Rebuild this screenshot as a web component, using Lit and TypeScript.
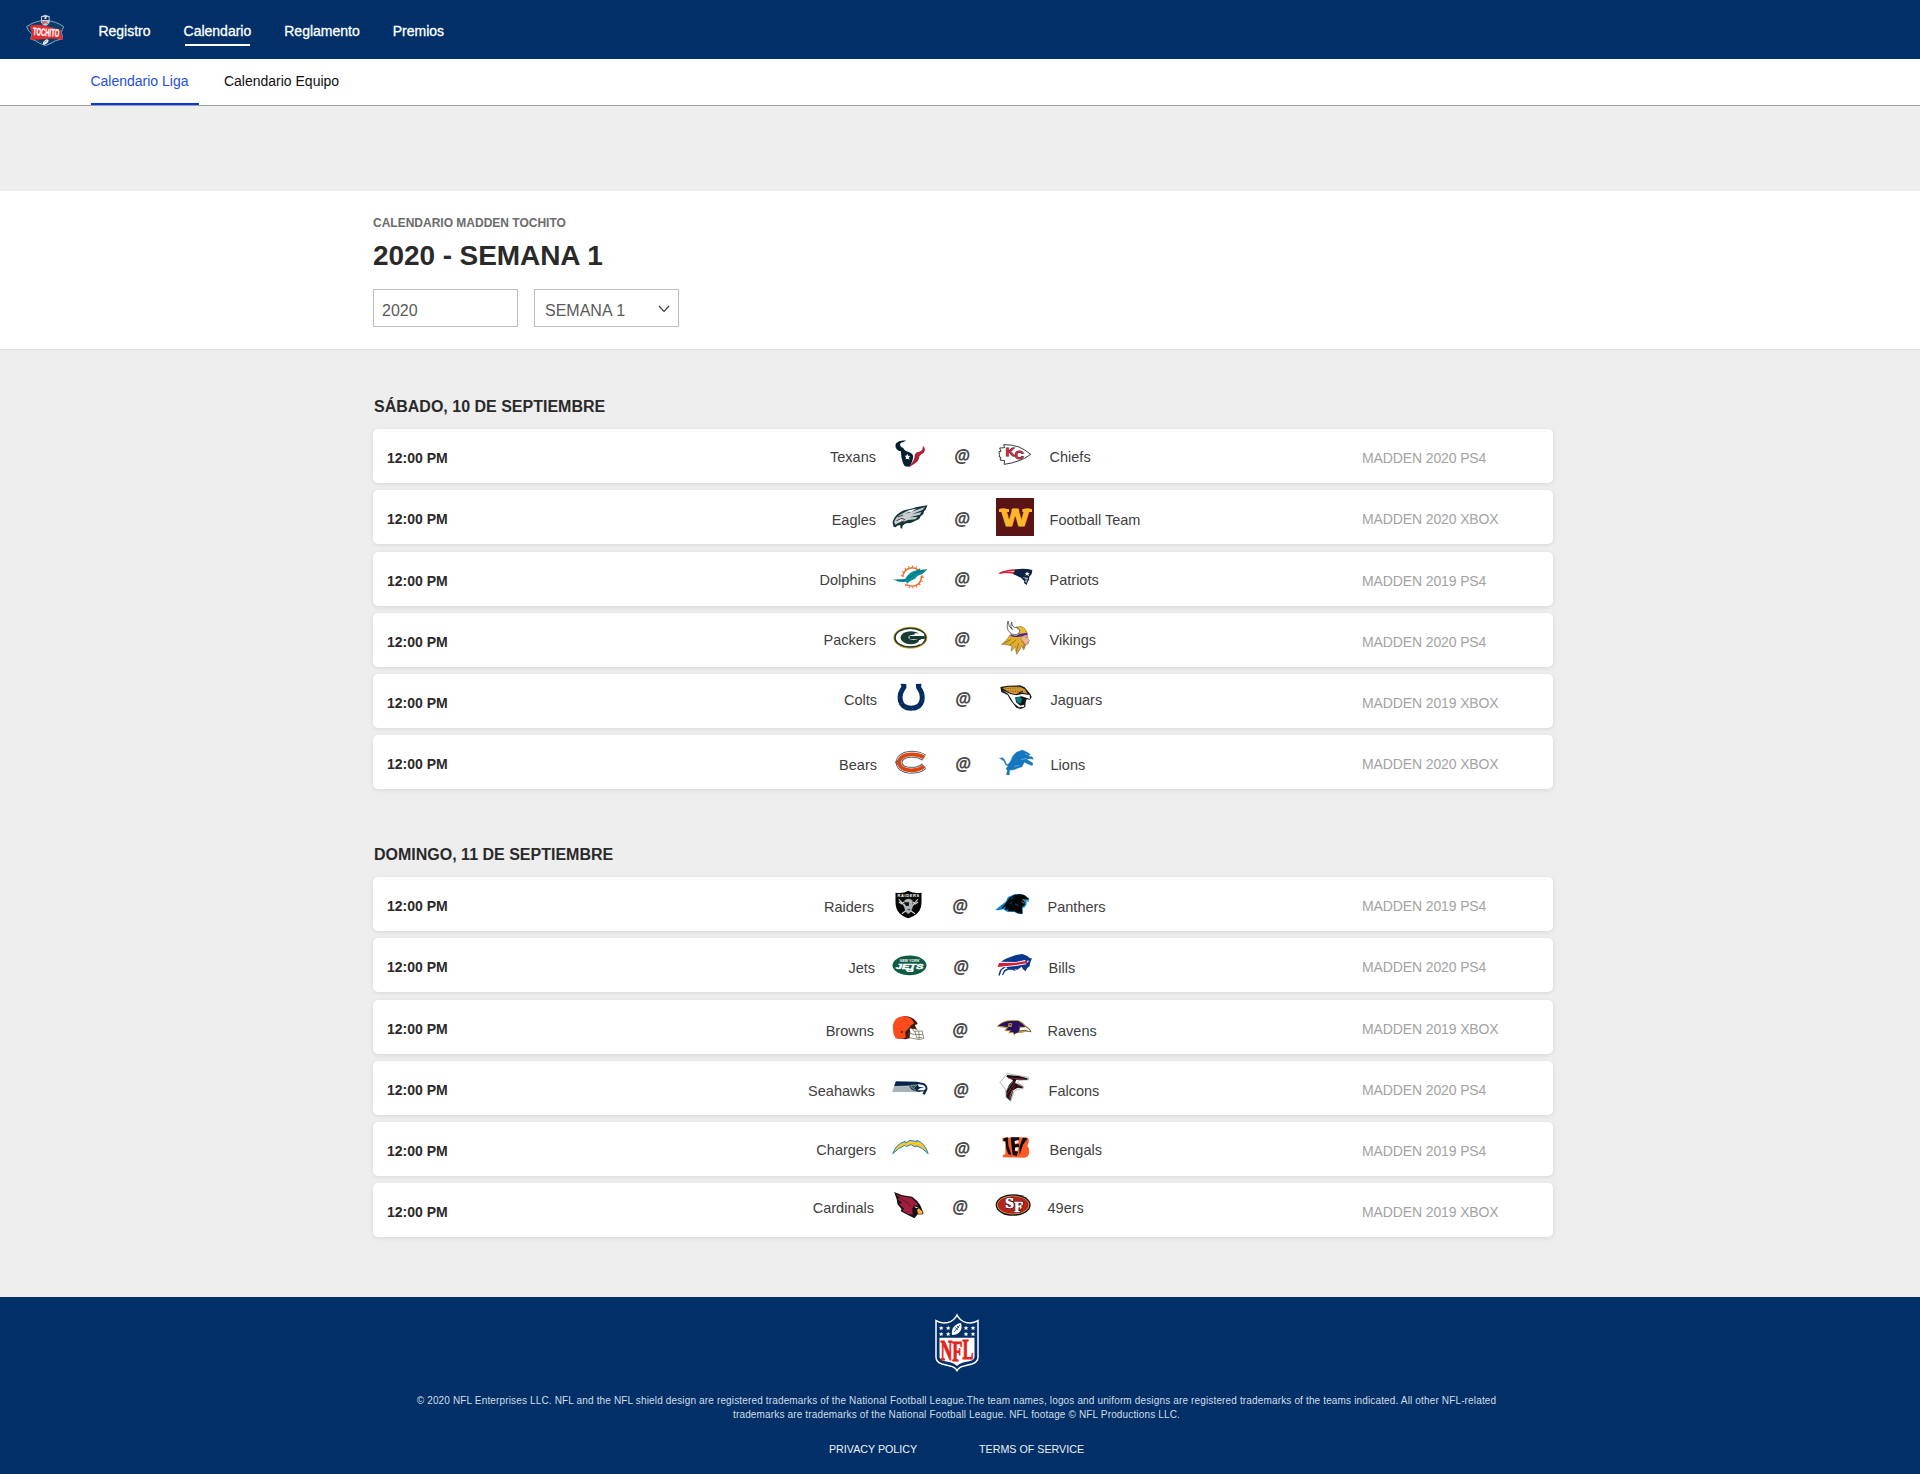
import { LitElement, html, svg, css, SVGTemplateResult } from "lit";
import { customElement, property } from "lit/decorators.js";

interface Mark { box: string; art: SVGTemplateResult; }
interface Game {
  away: string; home: string; platform: string;
  dx: number; top: number;
}

const LOGOS: Record<string, Mark> = {
  Texans: { box: "301.5 30 114 114", art: svg`
    <path fill="#03202f" d="M347 47C330 45 314 52 315 62C315 72 322 77 331 79C333 88 331 95 335 104C336 114 341 119 343 124L358 125C363 115 367 105 368 95C368 87 362 83 352 80C344 77 339 72 338 68C329 66 326 57 332 53C337 50 342 49 347 47Z"/>
    <path fill="#b2213a" d="M397 64C405 68 405 79 398 85C391 90 386 91 386 98C384 107 378 112 371 117L355 127C364 114 371 106 372 96C372 86 376 81 386 80C393 79 397 74 397 64Z"/>
    <path fill="#fff" d="M350 86L353 92L360 93L355 97L357 104L351 101L345 103L347 97L342 92L348 92Z"/>` },
  Chiefs: { box: "619 30 114 114", art: svg`
    <path fill="#fff" stroke="#2c2c2c" stroke-width="2.8" stroke-linejoin="round" d="M645 68L642 59Q665 58 688 66Q708 75 723 88Q705 102 688 107Q665 116 643 118L645 107L631 105L634 97L629 96Q630 89 628 80L634 79L630 69Z"/>
    <text x="648" y="94" class="heavy" font-size="31" fill="#e02840" stroke="#222" stroke-width="2.4" paint-order="stroke" textLength="54" lengthAdjust="spacingAndGlyphs" dy="0 9">KC</text>` },
  Eagles: { box: "301.5 218 114 114", art: svg`
    <path fill="#12343a" d="M306 291C309 279 317 268 327 262C345 249 362 254 375 246Q392 243 411 240L405 254L401 257L398 267L391 272L386 281L375 286Q363 294 349 294L342 296L336 302L335 310L330 308L329 299L320 301L316 306L309 304Z"/>
    <path fill="#c8cdd0" d="M311 290Q316 274 332 266Q350 254 372 251L344 266L380 253L403 245L396 254L364 267L393 260L388 268L358 276L382 275L374 282L352 284Q342 291 334 289L322 294L314 298Z"/>
    <path fill="none" stroke="#222" stroke-width="2.5" d="M318 286L335 279L344 284M328 292L340 287M322 275L338 269"/>
    <path fill="#fff" d="M323 285L334 282L330 288ZM350 258L380 249L362 260Z"/>` },
  "Football Team": { box: "619 218 114 114", art: svg`
    <rect x="619" y="218" width="114" height="114" fill="#5a1415"/>
    <text x="634" y="301" class="heavy" font-size="69" fill="#ffb62d" stroke="#ffb62d" stroke-width="3" textLength="85" lengthAdjust="spacingAndGlyphs">W</text>
    <path fill="#ffb62d" d="M628 251H658V260H628ZM698 251H727V260H698ZM666 251H688V258H666Z"/>` },
  Dolphins: { box: "301.5 400 114 114", art: svg`
    <circle cx="365" cy="457" r="28" fill="none" stroke="#f26a2b" stroke-width="4.5"/>
    <circle cx="365" cy="457" r="32" fill="none" stroke="#f26a2b" stroke-width="5" stroke-dasharray="3 8.5"/>
    <path fill="#fff" d="M314 459L348 457Q368 437 402 432L407 443L366 471L350 479L334 475Z"/>
    <path fill="#078e98" d="M307 463Q326 467 344 462Q358 440 378 437L388 432L390 436L411 433L402 443Q396 450 382 453Q374 464 361 468L349 477L347 471Q330 474 318 469Z"/>
    <path fill="none" stroke="#075a70" stroke-width="2.5" d="M350 461Q366 453 377 443L399 439M320 466L346 466"/>` },
  Patriots: { box: "619 400 114 114", art: svg`
    <path fill="#d4213c" d="M626 446Q645 435 678 434L677 439L648 440L677 442L673 447L646 445L631 448Z"/>
    <path fill="#0a2342" d="M677 434Q705 430 728 436L726 448L719 456L718 465L714 472L711 481L703 475L704 470L694 459L671 449Z"/>
    <path fill="#fff" d="M712 441L715 445L720 445L716 449L718 454L712 451L707 453L709 448L705 445L710 445Z"/>
    <path fill="#b6bec6" d="M698 457L716 460L713 464L711 474L705 472L708 464Z"/>
    <path stroke="#0a2342" stroke-width="1.5" d="M702 462L712 465M706 470L711 468"/>` },
  Packers: { box: "301.5 25 114 114", art: svg`
    <ellipse cx="359.5" cy="84" rx="51" ry="33" fill="#e0a62a"/>
    <ellipse cx="359.5" cy="84" rx="48.5" ry="30.5" fill="#173a33"/>
    <ellipse cx="359.5" cy="84" rx="43.5" ry="26" fill="#fff"/>
    <ellipse cx="361" cy="84" rx="31" ry="19.5" fill="#173a33"/>
    <ellipse cx="369" cy="83" rx="15" ry="7.5" fill="#fff"/>
    <rect x="372" y="71" width="28" height="8" fill="#fff"/>
    <rect x="357" y="79" width="46" height="9" fill="#173a33"/>
    <path fill="#fff" d="M386 91L401 91L392 104L381 103Z"/>` },
  Vikings: { box: "619 25 114 114", art: svg`
    <path fill="#e3ad2d" stroke="#70531f" stroke-width="1.6" d="M636 104L651 91L661 76L676 81L703 80L700 92L717 99L709 104L702 121L696 108L690 121L681 134L678 121L679 111L664 124L667 109L652 105Z"/>
    <path fill="#f0b92f" stroke="#5d4315" stroke-width="1.4" d="M680 52Q706 45 712 71L686 74Q693 60 680 52Z"/>
    <path fill="#fff" stroke="#333" stroke-width="2.2" d="M655 34Q648 58 661 69Q675 80 687 71Q696 60 680 54Q667 55 666 37Q660 50 668 60Q656 51 655 34Z"/>
    <path fill="#4f2683" d="M663 73Q676 82 688 74L713 69L714 76L687 81Q674 84 663 78Z"/>
    <path fill="#e9b996" stroke="#8f5c45" stroke-width="1.2" d="M699 80L714 77L715 87L720 94L714 97L716 103L704 104L700 94L693 89Z"/>
    <path stroke="#684a20" stroke-width="1.7" fill="none" d="M643 101L665 89M661 106L680 90M681 125L687 100M702 115L704 103L695 94M707 84L713 83"/>` },
  Colts: { box: "304.5 204 114 114", art: svg`
    <path fill="none" stroke="#022b60" stroke-width="15" d="M341 231C321 255 324 295 362 295C400 295 403 255 383 231"/>
    <path fill="#022b60" d="M330 221L347 222L348 235L335 235ZM376 222L393 221L391 235L377 235Z"/>
    <path fill="none" stroke="#9fb2c8" stroke-width="1.6" stroke-dasharray="2 17" d="M333 242C321 264 332 296 362 296C392 296 403 264 391 242"/>` },
  Jaguars: { box: "622 204 114 114", art: svg`
    <path fill="#171717" d="M632 231L654 227L691 226L705 232L714 242L722 252L726 261L721 269L711 268L708 276L707 291L693 297L680 293L662 270L654 255L635 246Z"/>
    <path fill="#d5982f" d="M638 234L655 230L691 230L706 238L713 251L693 247L678 253L660 248Z"/>
    <path fill="#fff" d="M637 240L655 251L663 264L672 279L688 292L703 290L704 284L692 287L679 277L677 262L696 259L721 267L720 255L698 252L680 256L662 252Z"/>
    <path fill="#087b8b" d="M675 263L690 260L697 267L694 280L684 280Z"/>
    <path fill="none" stroke="#6b4a1c" stroke-width="2.5" stroke-dasharray="3 4" d="M647 236L694 233M655 243L684 244L705 243"/>
    <path stroke="#111" stroke-width="2.5" d="M686 249L700 244"/>` },
  Bears: { box: "304.5 397 114 114", art: svg`
    <g fill="none">
    <path stroke="#94a0ac" stroke-width="21" d="M401 441Q385 431 364 431C338 431 326 443 326 455C326 468 338 479 364 479Q386 479 401 466"/>
    <path stroke="#273a52" stroke-width="18" d="M401 440Q385 431 364 431C338 431 326 443 326 455C326 468 338 479 364 479Q386 479 401 467"/>
    <path stroke="#fff" stroke-width="15" d="M401 440Q385 431 364 431C338 431 326 443 326 455C326 468 338 479 364 479Q386 479 401 467"/>
    <path stroke="#dc4510" stroke-width="11.5" d="M401 440Q385 431 364 431C338 431 326 443 326 455C326 468 338 479 364 479Q386 479 401 467"/></g>
    <path fill="#dc4510" stroke="#65717d" stroke-width="1.5" d="M313 455L324 447L323 464Z"/>` },
  Lions: { box: "622 397 114 114", art: svg`
    <path fill="#1577bd" stroke="#bac5ce" stroke-width="2.5" paint-order="stroke" d="M629 443L639 441Q648 448 650 459Q654 466 663 451L670 435L680 425L698 418L711 424L722 431L716 436L728 439L731 446L720 444L711 446L730 458L728 465L717 461L704 455L697 468L684 473L673 477L660 479L659 493L650 492L653 480L649 473L656 466Q647 466 643 451L635 446Z"/>
    <path stroke="#e6eef4" stroke-width="1.2" fill="none" d="M694 447L711 443M674 467L688 464M706 429L714 432"/>` },
  Raiders: { box: "295.5 15 114 114", art: svg`
    <path fill="#050505" d="M315 38Q339 41 353 32Q369 41 393 38L393 66C393 94 377 108 353 115C331 108 315 94 315 66Z"/>
    <text x="321" y="51" class="heavy" font-size="12" fill="#fff" textLength="65">RAIDERS</text>
    <path fill="#aeb3b5" d="M342 61Q354 52 366 61L367 80L361 96L353 102L345 95L340 79Z"/>
    <path fill="#111" d="M339 67L356 67L355 78L346 77ZM348 89L360 87L357 91Z"/>
    <path fill="none" stroke="#d0d2d2" stroke-width="3.5" d="M325 58L335 69L342 78M382 58L371 70L366 78M346 92L334 101M361 92L373 101M325 66L334 72L341 66M367 66L374 72L383 66"/>` },
  Panthers: { box: "613 15 114 114", art: svg`
    <path fill="#0788cc" d="M617 90L632 77L648 65L655 51L674 43L693 42L705 45L719 56L717 65L710 64L711 72L705 82L699 84L699 102L685 101L674 96L652 95L641 88L626 91Z"/>
    <path fill="#050608" d="M634 86L648 70L659 54L675 44L693 43L704 46L718 57L711 61L701 60L707 73L697 82L698 101L686 100L674 94L654 94L657 88L645 89L649 78L640 85Z"/>
    <path stroke="#0788cc" stroke-width="1.8" fill="none" d="M663 58L672 51M661 73L668 65M676 72L687 77"/>
    <path stroke="#dfe7ec" stroke-width="1.8" fill="none" d="M698 59L719 61M697 64L703 71"/>` },
  Jets: { box: "298.5 199 114 114", art: svg`
    <ellipse cx="357" cy="257" rx="51" ry="29.5" fill="#0c5b42"/>
    <text x="328" y="246" class="heavy slant" font-size="9" fill="#fff" textLength="59" lengthAdjust="spacingAndGlyphs">NEW YORK</text>
    <text x="316" y="268" class="heavy slant" font-size="24" fill="#fff" stroke="#fff" stroke-width="1.5" textLength="83" lengthAdjust="spacingAndGlyphs">JETS</text>
    <path fill="#fff" d="M344 270Q358 263 371 270L367 277L351 277Z"/><path stroke="#0c5b42" stroke-width="1.5" d="M353 272L363 272"/>` },
  Bills: { box: "616 199 114 114", art: svg`
    <path fill="#09388c" d="M633 247Q646 236 662 232L679 226L698 223L713 229L721 236L727 236L722 248L720 259L712 266L708 275L700 269L696 261L683 270L674 269L679 275L667 270L657 270L647 275L640 287L637 286L643 272L654 266L649 262L636 271L630 288L626 287L631 271L640 263L634 260Z"/>
    <path fill="#fff" d="M632 246L679 247L706 241L710 247L709 254L678 259L627 264Z"/>
    <path fill="#d41d38" d="M628 250L679 249L713 243L711 251L679 256L624 262Z"/>
    <path fill="#fff" d="M712 243L718 243L714 250Z"/>` },
  Browns: { box: "295.5 387 114 114", art: svg`
    <path fill="#3c1d0e" d="M339 408Q362 407 377 424L382 432L373 435L379 448L361 450L357 475L344 478L316 475Z"/>
    <path fill="#ff4a1b" d="M307 444C307 420 321 409 342 409Q364 411 371 430L360 437L352 448L344 455L346 472L336 477L315 474Q307 462 307 444Z"/>
    <path fill="none" stroke="#fff" stroke-width="5" d="M360 445L365 470L386 478L398 473L395 452L360 449M362 461L398 461"/>
    <path fill="none" stroke="#625747" stroke-width="2" d="M358 443L366 446L370 454L395 453L400 475L386 479L357 473L354 459L370 463L397 464M373 454L379 474L395 472M369 444L383 451M385 454L386 477"/>
    <circle cx="334" cy="456" r="3.5" fill="#632914"/>` },
  Ravens: { box: "613 387 114 114", art: svg`
    <path fill="#c49a3c" d="M621 440Q636 422 660 420L685 420L699 427L710 438L721 446L726 457L710 455L694 459L677 460L675 467L669 459L655 460L660 454L644 453L649 445L634 442Z"/>
    <path fill="#261260" d="M625 438Q641 423 665 423L687 423L699 432L708 441L692 440L686 457L674 462L670 456L660 457L664 451L649 451L656 442L639 439Z"/>
    <path fill="#fff" stroke="#161616" stroke-width="1.6" d="M690 442L708 440L719 448L723 455L705 451L688 453Z"/>
    <text x="654" y="441" class="heavy slant" font-size="18" fill="#dbaa3c">B</text>
    <path fill="#d5213b" d="M686 438L695 438L690 441Z"/>` },
  Seahawks: { box: "298.5 43 114 114", art: svg`
    <path fill="#a7b2b9" d="M311 94L358 95Q369 102 382 112L305 112Z"/>
    <path fill="#082448" d="M316 80L379 81L401 86Q411 93 411 103L403 120L396 118L400 110L383 112L364 105L354 93L311 94Z"/>
    <path fill="#fff" d="M381 88L398 91Q406 96 406 101L401 107L381 107L388 101L402 99L385 96Z"/>
    <path fill="none" stroke="#a7b2b9" stroke-width="2.3" d="M354 92Q361 99 377 107M360 92L379 91L369 101L360 92"/>
    <path fill="#64b33b" d="M364 91L374 92L369 96Z"/>` },
  Falcons: { box: "616 43 114 114", art: svg`
    <path fill="#fff" stroke="#aeb4b8" stroke-width="3" d="M631 83L653 57L716 68L717 75L688 77L683 84L702 96L700 102L683 104L672 112L663 140L649 128L648 105Z"/>
    <path fill="#101010" d="M650 66L653 61L687 64L713 71L714 75L680 75L676 84L700 96L698 101L684 99L671 107L662 138L650 127L650 108L658 91L670 77Z"/>
    <path stroke="#b51b36" stroke-width="2.6" d="M655 70L701 73M676 82L652 119M676 93L657 128M682 90L698 97"/>
    <path stroke="#bdc2c4" stroke-width="1.5" d="M671 79L649 110M668 107L660 133"/>` },
  Chargers: { box: "301.5 220 114 114", art: svg`
    <path fill="#ffc52b" stroke="#1686c4" stroke-width="3" stroke-linejoin="round" d="M307 297Q316 268 344 260L345 265L358 257L380 261L379 257Q403 265 413 297Q396 279 378 273L376 277L361 270L347 276L343 272Q323 280 307 297Z"/>` },
  Bengals: { box: "619 220 114 114", art: svg`
    <path fill="#fb5a24" d="M638 249L710 248Q720 252 717 262L713 274Q719 279 719 291Q718 307 705 309L640 308L639 301L647 299L647 261L639 260Z"/>
    <path fill="#0c0c0c" d="M642 251L655 248L656 271L665 302L656 298Q647 280 648 260L641 259ZM663 248L689 248L688 257L675 259L676 269L688 268L688 277L676 279L677 289L685 291L681 305L669 300L665 269ZM699 249L714 251L700 270L690 300L689 278Z"/>
    <path fill="#fff" d="M675 259L687 257L686 265L676 267ZM676 279L686 278L685 287L677 290Z"/>` },
  Cardinals: { box: "295.5 393 114 114", art: svg`
    <path fill="#151013" d="M311 411L336 421L365 425L380 438L389 450L399 474L397 478L382 477L372 490L352 480L331 469L333 462L321 448L319 434Z"/>
    <path fill="#a31d3e" d="M316 417L338 425L363 428L379 445L383 453L371 450L365 462L367 479L351 476L336 467L341 462L325 446L335 444L320 431L329 430Z"/>
    <path fill="#f8b633" stroke="#332213" stroke-width="1.5" d="M379 465L385 459L397 470L396 477L383 478Z"/>
    <path fill="#fff" d="M371 453L384 459L376 459Z"/>
    <path stroke="#151013" stroke-width="1.6" fill="none" d="M329 431L352 443L360 455"/>` },
  "49ers": { box: "613 393 114 114", art: svg`
    <ellipse cx="670.5" cy="450" rx="52.5" ry="32.5" fill="#15110f"/>
    <ellipse cx="670.5" cy="450" rx="48.5" ry="28.5" fill="#c6a45a"/>
    <ellipse cx="670.5" cy="450" rx="46" ry="26" fill="#b9231d"/>
    <text x="647" y="458" class="slab" font-size="38" fill="#fff" stroke="#241411" stroke-width="5" paint-order="stroke" textLength="52" lengthAdjust="spacingAndGlyphs" dy="0 13">SF</text>
    <text x="647" y="458" class="slab" font-size="38" fill="#fff" stroke="#fff" stroke-width="1.6" textLength="52" lengthAdjust="spacingAndGlyphs" dy="0 13" aria-hidden="true">SF</text>` },
};

const g = (away: string, home: string, platform: string, dx: number, top: number): Game => ({ away, home, platform, dx, top });

const DAYS = [
  { title: "SÁBADO, 10 DE SEPTIEMBRE", games: [
    g("Texans", "Chiefs", "MADDEN 2020 PS4", 0, 6),
    g("Eagles", "Football Team", "MADDEN 2020 XBOX", 0, 8),
    g("Dolphins", "Patriots", "MADDEN 2019 PS4", 0, 6),
    g("Packers", "Vikings", "MADDEN 2020 PS4", 0, 5),
    g("Colts", "Jaguars", "MADDEN 2019 XBOX", 1, 4),
    g("Bears", "Lions", "MADDEN 2020 XBOX", 1, 8),
  ] },
  { title: "DOMINGO, 11 DE SEPTIEMBRE", games: [
    g("Raiders", "Panthers", "MADDEN 2019 PS4", -2, 8),
    g("Jets", "Bills", "MADDEN 2020 PS4", -1, 8),
    g("Browns", "Ravens", "MADDEN 2019 XBOX", -2, 9),
    g("Seahawks", "Falcons", "MADDEN 2020 PS4", -1, 8),
    g("Chargers", "Bengals", "MADDEN 2019 PS4", 0, 6),
    g("Cardinals", "49ers", "MADDEN 2019 XBOX", -2, 3),
  ] },
];

@customElement("team-logo")
class TeamLogo extends LitElement {
  @property() team = "";
  static styles = css`
    :host { display: block; width: 38px; height: 38px; }
    .art { display: block; width: 38px; height: 38px; overflow: visible; }
    .heavy { font-family: "Liberation Sans", sans-serif; font-weight: 700; }
    .slab { font-family: "DejaVu Serif", serif; font-weight: 700; }
    .slant { font-style: italic; }
  `;
  render() {
    const m = LOGOS[this.team];
    return m ? html`<svg class="art" viewBox=${m.box} aria-hidden="true">${m.art}</svg>` : html``;
  }
}

@customElement("game-row")
class GameRow extends LitElement {
  @property({ attribute: false }) game!: Game;
  static styles = css`
    :host { display: block; }
    .card { display: flex; height: 54px; box-sizing: border-box; padding-left: 14px; background: #fff; border-radius: 5px; box-shadow: 0 1px 4px rgba(0,0,0,.1); }
    .time { width: 284px; font-size: 14px; font-weight: 700; line-height: 58px; color: #2a2a2a; }
    .match { display: grid; box-sizing: border-box; width: 691px; height: 54px; grid-template-columns: 203px 38px 38px 38px 200px; column-gap: 14.7px; align-items: start; color: #404040; }
    .name { font-size: 14.5px; line-height: 44px; white-space: nowrap; }
    .away { text-align: right; }
    .home { padding-left: .8px; }
    .at { font-family: "Noto Sans", sans-serif; font-size: 20px; font-weight: 600; font-style: italic; line-height: 41px; text-align: center; color: #4a4a4a; transform: scaleX(.9); }
    .platform { font-size: 14px; line-height: 58px; letter-spacing: -.12px; color: #a3a3a3; white-space: nowrap; }
  `;
  render() {
    const m = this.game;
    return html`<div class="card">
      <div class="time">12:00 PM</div>
      <div class="match" style="padding-top:${m.top}px;padding-left:${2 + m.dx}px">
        <span class="name away">${m.away}</span>
        <team-logo team=${m.away}></team-logo>
        <span class="at">@</span>
        <team-logo team=${m.home}></team-logo>
        <span class="name home">${m.home}</span>
      </div>
      <div class="platform">${m.platform}</div>
    </div>`;
  }
}

@customElement("app-root")
class AppRoot extends LitElement {
  static styles = css`
    :host { display: block; width: 1920px; min-height: 1474px; background: #eee; font-family: "Liberation Sans", Arial, sans-serif; color: #2a2a2a; }
    .top { display: flex; height: 59px; background: #003067; padding-left: 26px; box-sizing: border-box; }
    .brand { width: 38px; height: 31px; margin-top: 15px; overflow: visible; }
    .nav { display: flex; gap: 33px; padding: 20px 0 0 34.4px; }
    .link { font-size: 14px; line-height: 22px; color: #fff; -webkit-text-stroke: .3px #fff; }
    .link.on::after { content: ""; display: block; width: 65px; height: 2px; margin: 2px 0 0 1px; background: #fff; }
    .tabs { display: flex; height: 47px; box-sizing: border-box; padding-left: 91px; gap: 25.5px; background: #fff; border-bottom: 1px solid #9f9f9f; }
    .tab { height: 46px; box-sizing: border-box; font-size: 14px; line-height: 45px; text-indent: -.6px; color: #111; }
    .tab.on { width: 108px; color: #2350dc; border-bottom: 2px solid #0a38de; }
    .hero { box-sizing: border-box; height: 159px; margin-top: 85px; padding: 24px 0 0 373px; background: #fff; border-bottom: 1px solid #dedede; }
    .eyebrow { font-size: 12px; font-weight: 700; line-height: 16px; color: #6b6b6b; }
    .title { margin: 7px 0 15px; font-size: 28px; font-weight: 700; line-height: 36px; letter-spacing: -.08px; }
    .filters { display: flex; gap: 16px; }
    .field { display: flex; justify-content: space-between; box-sizing: border-box; width: 145px; height: 38px; border: 1px solid #bfbfbf; padding: 5px 8px 0; font-size: 16px; line-height: 32px; color: #5a5a5a; }
    .field.pick { padding-left: 10px; }
    .chev { width: 12px; height: 8px; margin-top: 10px; }
    .days { padding: 47px 367px 60px 373px; }
    .day + .day { margin-top: 56px; }
    .date { margin: 0 0 12px 1px; font-size: 16px; font-weight: 700; line-height: 20px; }
    .rows { display: flex; flex-direction: column; gap: 7px; }
    .rows > :nth-child(3) { margin-top: 1px; }
    .foot { display: flex; flex-direction: column; align-items: center; box-sizing: border-box; height: 177px; padding: 17px 7px 0 0; background: #003067; color: #fff; }
    .shield { width: 44px; height: 58px; overflow: visible; }
    .legal { margin-top: 21.5px; font-size: 10px; line-height: 14.3px; text-align: center; letter-spacing: .15px; color: #d5dde7; white-space: nowrap; }
    .terms { display: flex; gap: 62px; margin-top: 19.5px; font-size: 10.7px; line-height: 14px; color: #eef2f6; }
    .slab { font-family: "Liberation Serif", serif; font-weight: 700; }
    .heavy { font-family: "Liberation Sans", sans-serif; font-weight: 700; }
  `;
  render() {
    return html`
      <header class="top">
        <svg class="brand" viewBox="78 45 114 93" aria-hidden="true">
          <path fill="#0b3d6b" stroke="#9dc3d6" stroke-width="2.4" d="M80 80Q103 63 135 61Q168 63 191 80Q187 88 184 98Q189 109 186 117Q165 120 153 130L136 137L119 130Q107 120 92 117L96 103Q84 93 80 80Z"/>
          <path fill="#b9cedb" d="M123 49L136 44L149 49V67Q146 75 136 78Q126 75 123 67Z"/>
          <path fill="#0d3565" d="M126 51H146V60H126Z"/>
          <path fill="#e9dfe2" d="M134 52L140 48L139 56L133 58Z"/>
          <text x="126" y="73" class="heavy" font-size="12" fill="#d9263a" textLength="20" lengthAdjust="spacingAndGlyphs">NFL</text>
          <path fill="#e42b2d" d="M89 77Q112 71 135 77Q162 82 184 91L181 98L190 120Q162 113 136 117Q111 120 91 119L97 104Z"/>
          <text x="99" y="108" class="heavy" font-size="32" fill="#fff" stroke="#fff" textLength="79" lengthAdjust="spacingAndGlyphs" transform="rotate(4 138 98)">TOCHITO</text>
          <ellipse cx="137" cy="126" rx="10" ry="5.5" fill="#eef4f7" transform="rotate(-42 137 126)"/>
          <path stroke="#31587c" stroke-width="1.6" d="M132 128L141 121"/>
        </svg>
        <nav class="nav">
          <span class="link">Registro</span><span class="link on">Calendario</span>
          <span class="link">Reglamento</span><span class="link">Premios</span>
        </nav>
      </header>
      <div class="tabs"><span class="tab on">Calendario Liga</span><span class="tab">Calendario Equipo</span></div>
      <section class="hero">
        <div class="eyebrow">CALENDARIO MADDEN TOCHITO</div>
        <h1 class="title">2020 - SEMANA 1</h1>
        <div class="filters">
          <div class="field">2020</div>
          <div class="field pick"><span>SEMANA 1</span>
            <svg class="chev" viewBox="0 0 12 8"><path d="M1 1L6 6.4L11 1" fill="none" stroke="#444" stroke-width="1.3"/></svg>
          </div>
        </div>
      </section>
      <main class="days">
        ${DAYS.map(d => html`<section class="day">
          <h2 class="date">${d.title}</h2>
          <div class="rows">${d.games.map(m => html`<game-row .game=${m}></game-row>`)}</div>
        </section>`)}
      </main>
      <footer class="foot">
        <svg class="shield" viewBox="0 0 44 58" aria-hidden="true">
          <path fill="#003067" stroke="#fff" stroke-width="1.5" d="M22 1Q19 7 13 8.5Q6 10 1 6.7V43Q1 48 7 50L15 52Q20 53 22 56.7Q24 53 29 52L37 50Q43 48 43 43V6.7Q38 10 31 8.5Q25 7 22 1Z"/>
          <path fill="#fff" d="M4.5 23.7H39.5V43Q39 46 35 47L28 48.5Q24 49.5 22 52Q20 49.5 16 48.5L9 47Q5 46 4.5 43Z"/>
          <path fill="#fff" d="M17 21C16 15 19 10 26 9C28 15 25 21 17 21Z"/>
          <path stroke="#003067" stroke-width=".8" d="M19 18L25 11M20 13.5L23 15.8M22 12L24 14"/>
          ${[[6.2, 14], [13.2, 14], [31, 14], [38, 14], [6.2, 20], [13.2, 20], [31, 20], [38, 20]].map(([x, y]) => svg`
            <path fill="#fff" transform="translate(${x} ${y})" d="M0 -2.3L.7 -.7L2.4 -.6L1.1 .5L1.5 2.1L0 1.2L-1.5 2.1L-1.1 .5L-2.4 -.6L-.7 -.7Z"/>`)}
          <text x="5.4" y="46" dy="0 1.2 -2" class="slab" font-size="30" fill="#e3231b" stroke="#e3231b" stroke-width="1" textLength="33" lengthAdjust="spacingAndGlyphs">NFL</text>
        </svg>
        <div class="legal">© 2020 NFL Enterprises LLC. NFL and the NFL shield design are registered trademarks of the National Football League.The team names, logos and uniform designs are registered trademarks of the teams indicated. All other NFL-related<br>trademarks are trademarks of the National Football League. NFL footage © NFL Productions LLC.</div>
        <div class="terms"><span>PRIVACY POLICY</span><span>TERMS OF SERVICE</span></div>
      </footer>
    `;
  }
}
